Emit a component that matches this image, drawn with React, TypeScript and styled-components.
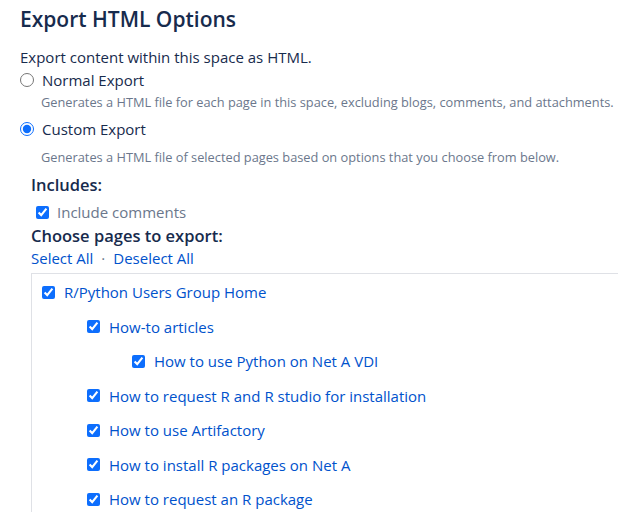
import React from 'react';
import styled, { createGlobalStyle } from 'styled-components';

const GlobalStyle = createGlobalStyle`
  html, body {
    margin: 0;
    padding: 0;
    background: #fff;
    overflow: hidden;
  }
  body {
    font-family: "Open Sans", "Noto Sans", sans-serif;
    color: #172b4d;
  }
`;

const Page = styled.div`
  padding: 4px 0 0 20px;
  width: 618px;
  height: 512px;
  box-sizing: border-box;
  overflow: hidden;
`;

const Title = styled.h1`
  margin: 0 0 12px;
  font-size: 21px;
  font-weight: 600;
  line-height: 30px;
  color: #172b4d;
`;

const Intro = styled.p`
  margin: 0;
  font-size: 15px;
  line-height: 22px;
`;

const RadioRow = styled.label`
  display: flex;
  align-items: center;
  gap: 8px;
  font-size: 15px;
  line-height: 24px;
  margin-left: -3px;
`;

const Radio = styled.input.attrs({ type: 'radio', name: 'mode' })`
  width: 14px;
  height: 14px;
  margin: 0 0 0 3px;
  accent-color: #0d6efd;
`;

const Hint = styled.p<{ spaced?: boolean }>`
  margin: ${(p) => (p.spaced ? '6px 0 6px 21px' : '0 0 5px 21px')};
  font-size: 12.8px;
  line-height: 20px;
  white-space: nowrap;
  color: #6b778c;
`;

const Options = styled.div`
  padding-left: 11px;
`;

const SubHeading = styled.h3`
  margin: 0;
  font-size: 16.5px;
  font-weight: 600;
  line-height: 24px;
`;

const CheckRow = styled.label`
  display: flex;
  align-items: center;
  gap: 8px;
  margin: 3px 0 0 5px;
  font-size: 15px;
  line-height: 24px;
  color: #6b778c;
`;

const Check = styled.input.attrs({ type: 'checkbox', defaultChecked: true })`
  width: 13px;
  height: 13px;
  margin: 0;
  accent-color: #0d6efd;
`;

const Links = styled.div`
  display: flex;
  gap: 8px;
  font-size: 15px;
  line-height: 20px;
  color: #6b778c;
`;

const Link = styled.a`
  color: #0052cc;
  text-decoration: none;
  cursor: pointer;
`;

const Tree = styled.div`
  margin-top: 5px;
  border: 1px solid #dfe1e6;
  border-right: none;
  padding: 1px 0 0 10px;
  height: 400px;
`;

const TreeRow = styled.label<{ depth: number }>`
  display: flex;
  align-items: center;
  gap: 9px;
  height: 34.5px;
  padding-left: ${(p) => p.depth * 45}px;
  font-size: 15px;
  color: #0052cc;
`;

const pages: [string, number][] = [
  ['R/Python Users Group Home', 0],
  ['How-to articles', 1],
  ['How to use Python on Net A VDI', 2],
  ['How to request R and R studio for installation', 1],
  ['How to use Artifactory', 1],
  ['How to install R packages on Net A', 1],
  ['How to request an R package', 1],
];

export default function App() {
  return (
    <>
      <GlobalStyle />
      <Page>
        <Title>Export HTML Options</Title>
        <Intro>Export content within this space as HTML.</Intro>
        <RadioRow>
          <Radio value="normal" />
          Normal Export
        </RadioRow>
        <Hint>Generates a HTML file for each page in this space, excluding blogs, comments, and attachments.</Hint>
        <RadioRow>
          <Radio value="custom" defaultChecked />
          Custom Export
        </RadioRow>
        <Hint spaced>Generates a HTML file of selected pages based on options that you choose from below.</Hint>
        <Options>
          <SubHeading>Includes:</SubHeading>
          <CheckRow>
            <Check />
            Include comments
          </CheckRow>
          <SubHeading>Choose pages to export:</SubHeading>
          <Links>
            <Link>Select All</Link>
            <span>·</span>
            <Link>Deselect All</Link>
          </Links>
          <Tree>
            {pages.map(([name, depth]) => (
              <TreeRow key={name} depth={depth}>
                <Check />
                {name}
              </TreeRow>
            ))}
          </Tree>
        </Options>
      </Page>
    </>
  );
}
